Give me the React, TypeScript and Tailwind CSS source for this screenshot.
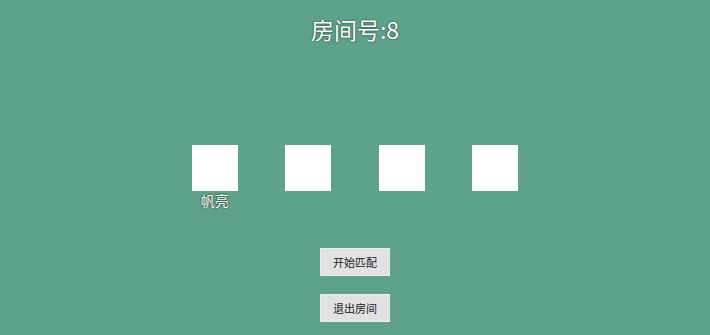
import React from 'react';

const players = ['帆亮', '', '', ''];

const App: React.FC = () => {
    return (
        <div
            className="w-[710px] h-[335px] bg-[#5fa28a] flex flex-col items-center overflow-hidden"
            style={{ fontFamily: '"Noto Sans CJK SC", "Noto Sans", sans-serif' }}
        >
            <h1 className="mt-[13px] h-[32px] text-[23px] leading-[32px] text-white [text-shadow:0_0_2px_rgba(0,0,0,0.8)]">
                房间号:8
            </h1>
            <div className="mt-[100px] flex gap-[47.5px] h-[68px]">
                {players.map((name, i) => (
                    <div key={i} className="w-[46px] flex flex-col items-center">
                        <div className="w-[46px] h-[46px] bg-white" />
                        {name && (
                            <span className="-mt-[1px] text-[14px] leading-[20px] text-white whitespace-nowrap [text-shadow:0_0_2px_rgba(0,0,0,0.9)]">
                                {name}
                            </span>
                        )}
                    </div>
                ))}
            </div>
            <div className="mt-[35px] flex flex-col gap-[18px]">
                <button className="w-[70px] h-[28px] bg-[#e1e1e1] border border-[#ececec] text-[11px] text-[#222]">
                    开始匹配
                </button>
                <button className="w-[70px] h-[28px] bg-[#e1e1e1] border border-[#ececec] text-[11px] text-[#222]">
                    退出房间
                </button>
            </div>
        </div>
    );
};

export default App;
